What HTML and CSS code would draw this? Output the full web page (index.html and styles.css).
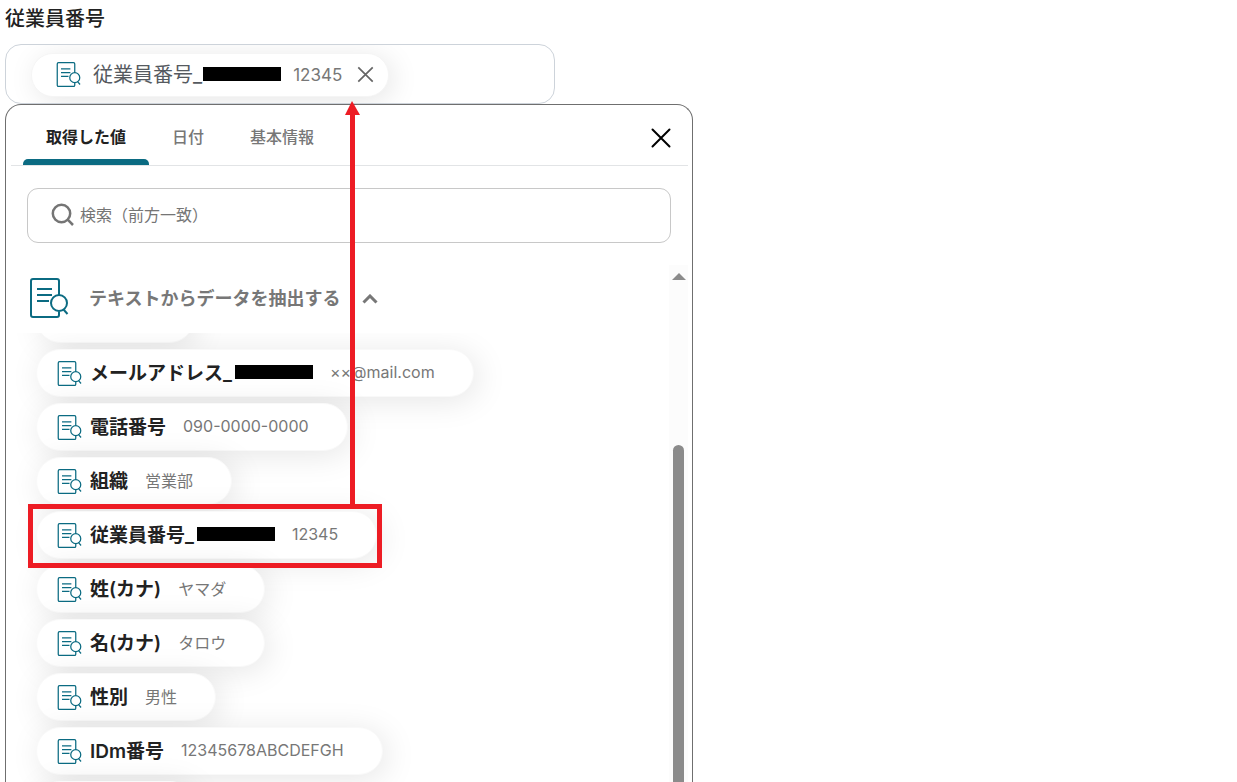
FILE: index.html
```html
<!DOCTYPE html>
<html lang="ja">
<head>
    <meta charset="UTF-8">
    <title>従業員番号</title>
    <link rel="stylesheet" href="styles.css">
</head>
<body>
<svg class="defs" width="0" height="0">
    <symbol id="doc-search" viewBox="0 0 40 40">
        <path d="M30 17V3a2 2 0 0 0-2-2H4a2 2 0 0 0-2 2v34a2 2 0 0 0 2 2h24a2 2 0 0 0 2-2v-3.500"/>
        <path d="M8 11h15M8 17h15M8 23h12"/>
        <circle cx="30" cy="25" r="8"/>
        <path d="M34.500 31.500l4 4.500"/>
    </symbol>
    <symbol id="cross" viewBox="0 0 20 20">
        <path d="M1.500 1.500l17 17M18.500 1.500l-17 17"/>
    </symbol>
</svg>

<h1 class="field-title">従業員番号</h1>
<div class="field">
    <div class="chip">
        <svg class="doc-icon"><use href="#doc-search"/></svg>
        <span class="chip-label">従業員番号_<span class="mask"></span></span>
        <span class="chip-value">12345</span>
        <button type="button" class="chip-remove" aria-label="削除"><svg><use href="#cross"/></svg></button>
    </div>
</div>

<div class="panel">
    <div class="tabs">
        <button type="button" class="tab active">取得した値</button>
        <button type="button" class="tab">日付</button>
        <button type="button" class="tab">基本情報</button>
        <button type="button" class="panel-close" aria-label="閉じる"><svg><use href="#cross"/></svg></button>
    </div>
    <div class="search">
        <svg class="search-icon" viewBox="0 0 24 24"><circle cx="10.500" cy="10.500" r="8.700"/><path d="M16.700 16.700l5.300 5.300"/></svg>
        <input type="text" class="search-input" placeholder="検索（前方一致）" aria-label="検索（前方一致）">
    </div>
    <div class="panel-body">
        <div class="content">
            <button type="button" class="group-title">
                <svg class="group-icon"><use href="#doc-search"/></svg>
                <span class="group-name">テキストからデータを抽出する</span>
                <svg class="group-arrow" viewBox="0 0 16 10"><path d="M1.500 8.500L8 2l6.500 6.500"/></svg>
            </button>
            <div class="list-wrap">
                <ul class="list">
                    <li><div class="item item-cut"></div></li>
                    <li><button type="button" class="item"><svg class="doc-icon"><use href="#doc-search"/></svg><span class="item-label">メールアドレス_<span class="mask"></span></span><span class="item-value">××@mail.com</span></button></li>
                    <li><button type="button" class="item"><svg class="doc-icon"><use href="#doc-search"/></svg><span class="item-label">電話番号</span><span class="item-value">090-0000-0000</span></button></li>
                    <li><button type="button" class="item"><svg class="doc-icon"><use href="#doc-search"/></svg><span class="item-label">組織</span><span class="item-value">営業部</span></button></li>
                    <li><button type="button" class="item"><svg class="doc-icon"><use href="#doc-search"/></svg><span class="item-label">従業員番号_<span class="mask"></span></span><span class="item-value">12345</span></button></li>
                    <li><button type="button" class="item"><svg class="doc-icon"><use href="#doc-search"/></svg><span class="item-label">姓(カナ)</span><span class="item-value">ヤマダ</span></button></li>
                    <li><button type="button" class="item"><svg class="doc-icon"><use href="#doc-search"/></svg><span class="item-label">名(カナ)</span><span class="item-value">タロウ</span></button></li>
                    <li><button type="button" class="item"><svg class="doc-icon"><use href="#doc-search"/></svg><span class="item-label">性別</span><span class="item-value">男性</span></button></li>
                    <li><button type="button" class="item"><svg class="doc-icon"><use href="#doc-search"/></svg><span class="item-label">IDm番号</span><span class="item-value">12345678ABCDEFGH</span></button></li>
                    <li><div class="item item-cut"></div></li>
                </ul>
            </div>
        </div>
        <div class="scrollbar">
            <div class="scroll-up"></div>
            <div class="scroll-thumb"></div>
        </div>
    </div>
</div>

<!--赤枠と矢印-->
<div class="mark-box"></div>
<div class="mark-arrow"></div>
</body>
</html>
```

FILE: styles.css
```css
* {
    box-sizing: border-box;
}

body {
    position: relative;
    display: flex;
    flex-direction: column;
    height: 100vh;
    margin: 0;
    padding: 0 5px;
    overflow: hidden;
    background: #ffffff;
    color: #222222;
    font-family: Inter, "Noto Sans CJK JP", sans-serif;
    font-size: 16px;
}

button {
    margin: 0;
    padding: 0;
    border: none;
    background: none;
    color: inherit;
    font: inherit;
    cursor: pointer;
}

svg {
    display: block;
    flex: none;
    fill: none;
    stroke: currentColor;
}

.defs {
    position: absolute;
}

.field-title {
    flex: none;
    height: 44px;
    margin: 0;
    font-size: 20px;
    font-weight: 500;
    line-height: 38px;
}

.field {
    flex: none;
    display: flex;
    align-items: center;
    max-width: 550px;
    height: 60px;
    padding: 1px 25px 0;
    border: 1px solid #cdd3da;
    border-radius: 16px;
    overflow: hidden;
}

.chip {
    display: flex;
    align-items: center;
    height: 44px;
    padding: 0 14px 0 24px;
    border: 1px solid #f5f5f5;
    border-radius: 22px;
    background: #ffffff;
    box-shadow: 4px 4px 28px rgba(0, 0, 0, 0.1);
}

.doc-icon {
    width: 25px;
    height: 25px;
    color: #0b6b82;
    stroke-width: 2;
}

.chip-label {
    display: flex;
    align-items: center;
    margin: 0 12px;
    padding-bottom: 2px;
    color: #555a60;
    font-size: 20px;
}

.chip-value {
    color: #777777;
    font-size: 17px;
}

.chip-remove {
    margin-left: 15px;
    color: #666666;
}

.chip-remove svg {
    width: 17px;
    height: 17px;
    stroke-width: 2;
}

.mask {
    display: inline-block;
    width: 78px;
    height: 14px;
    margin-left: 1px;
    background: #000000;
}

.panel {
    flex: 1;
    display: flex;
    flex-direction: column;
    min-height: 0;
    max-width: 688px;
    border: 1px solid #6f6f6f;
    border-bottom: none;
    border-radius: 16px 16px 0 0;
}

.tabs {
    flex: none;
    display: flex;
    height: 61px;
    margin: 0 4px 0 5px;
    padding: 0 17px 0 12px;
    border-bottom: 1px solid #e2e4e6;
}

.tab {
    padding: 7px 23px 0;
    border-bottom: 6px solid transparent;
    color: #777777;
    font-size: 16px;
    font-weight: 500;
}

.tab.active {
    position: relative;
    color: #222222;
    font-weight: 600;
}

.tab.active::after {
    content: "";
    position: absolute;
    left: 0;
    right: 0;
    bottom: -6px;
    height: 6px;
    border-radius: 5px 5px 0 0;
    background: #0b6b82;
}

.panel-close {
    margin-left: auto;
    padding-top: 5px;
    color: #000000;
}

.panel-close svg {
    width: 20px;
    height: 20px;
    stroke-width: 2;
    stroke-linecap: round;
}

.search {
    flex: none;
    display: flex;
    align-items: center;
    height: 55px;
    margin: 22px 21px;
    padding: 0 23px 2px;
    border: 1px solid #c8c8c8;
    border-radius: 11px;
}

.search-icon {
    width: 24px;
    height: 24px;
    color: #757575;
    stroke-width: 2.500;
}

.search-input {
    flex: 1;
    height: 40px;
    padding: 0 5px;
    border: none;
    outline: none;
    background: none;
    font: inherit;
}

.search-input::placeholder {
    color: #757575;
}

.panel-body {
    flex: 1;
    display: flex;
    min-height: 0;
}

.content {
    flex: 1;
    display: flex;
    flex-direction: column;
    min-width: 0;
}

.group-title {
    flex: none;
    display: flex;
    align-items: center;
    height: 68px;
    padding: 0 23px 2px;
    color: #777777;
    font-size: 18px;
    font-weight: 600;
}

.group-icon {
    width: 40px;
    height: 40px;
    margin-right: 20px;
    color: #0b6b82;
    stroke-width: 2;
}

.group-name {
    padding-bottom: 2px;
}

.group-arrow {
    width: 16px;
    height: 10px;
    margin: 2px 0 0 22px;
    stroke-width: 3;
}

.list-wrap {
    flex: 1;
    min-height: 0;
    overflow: hidden;
}

/*一つ目の項目は上に隠れている*/
.list {
    display: flex;
    flex-direction: column;
    gap: 6px;
    margin: -38px 0 0;
    padding: 0 30px;
    list-style: none;
}

.item {
    display: flex;
    align-items: center;
    width: fit-content;
    height: 48px;
    padding: 0 38px 0 20px;
    border: 1px solid #f9f9f9;
    border-radius: 24px;
    background: #ffffff;
    box-shadow: 4px 4px 32px rgba(0, 0, 0, 0.1);
}

.item-cut {
    width: 158px;
}

.item-label {
    display: flex;
    align-items: center;
    margin: 0 17px 0 8px;
    padding-bottom: 3px;
    font-size: 19px;
    font-weight: 600;
}

.item-label .mask {
    margin-left: 3px;
}

.item-value {
    padding-bottom: 2px;
    color: #777777;
}

.scrollbar {
    flex: none;
    display: flex;
    flex-direction: column;
    align-items: center;
    width: 19px;
    margin-right: 4px;
    padding-top: 8px;
    background: #fcfcfc;
}

.scroll-up {
    border: 7px solid transparent;
    border-top: none;
    border-bottom-color: #8b8b8b;
}

.scroll-thumb {
    flex: 1;
    width: 11px;
    margin-top: 165px;
    border-radius: 6px 6px 0 0;
    background: #8b8b8b;
}

.mark-box {
    position: absolute;
    left: 28px;
    top: 504px;
    width: 354px;
    height: 64px;
    border: 5px solid #ed1c24;
}

.mark-arrow {
    position: absolute;
    left: 350px;
    top: 114px;
    width: 5px;
    height: 392px;
    background: #ed1c24;
}

.mark-arrow::before {
    content: "";
    position: absolute;
    left: -5px;
    top: -13px;
    border: 7px solid transparent;
    border-width: 0 8px 14px 7px;
    border-bottom-color: #ed1c24;
}
```
